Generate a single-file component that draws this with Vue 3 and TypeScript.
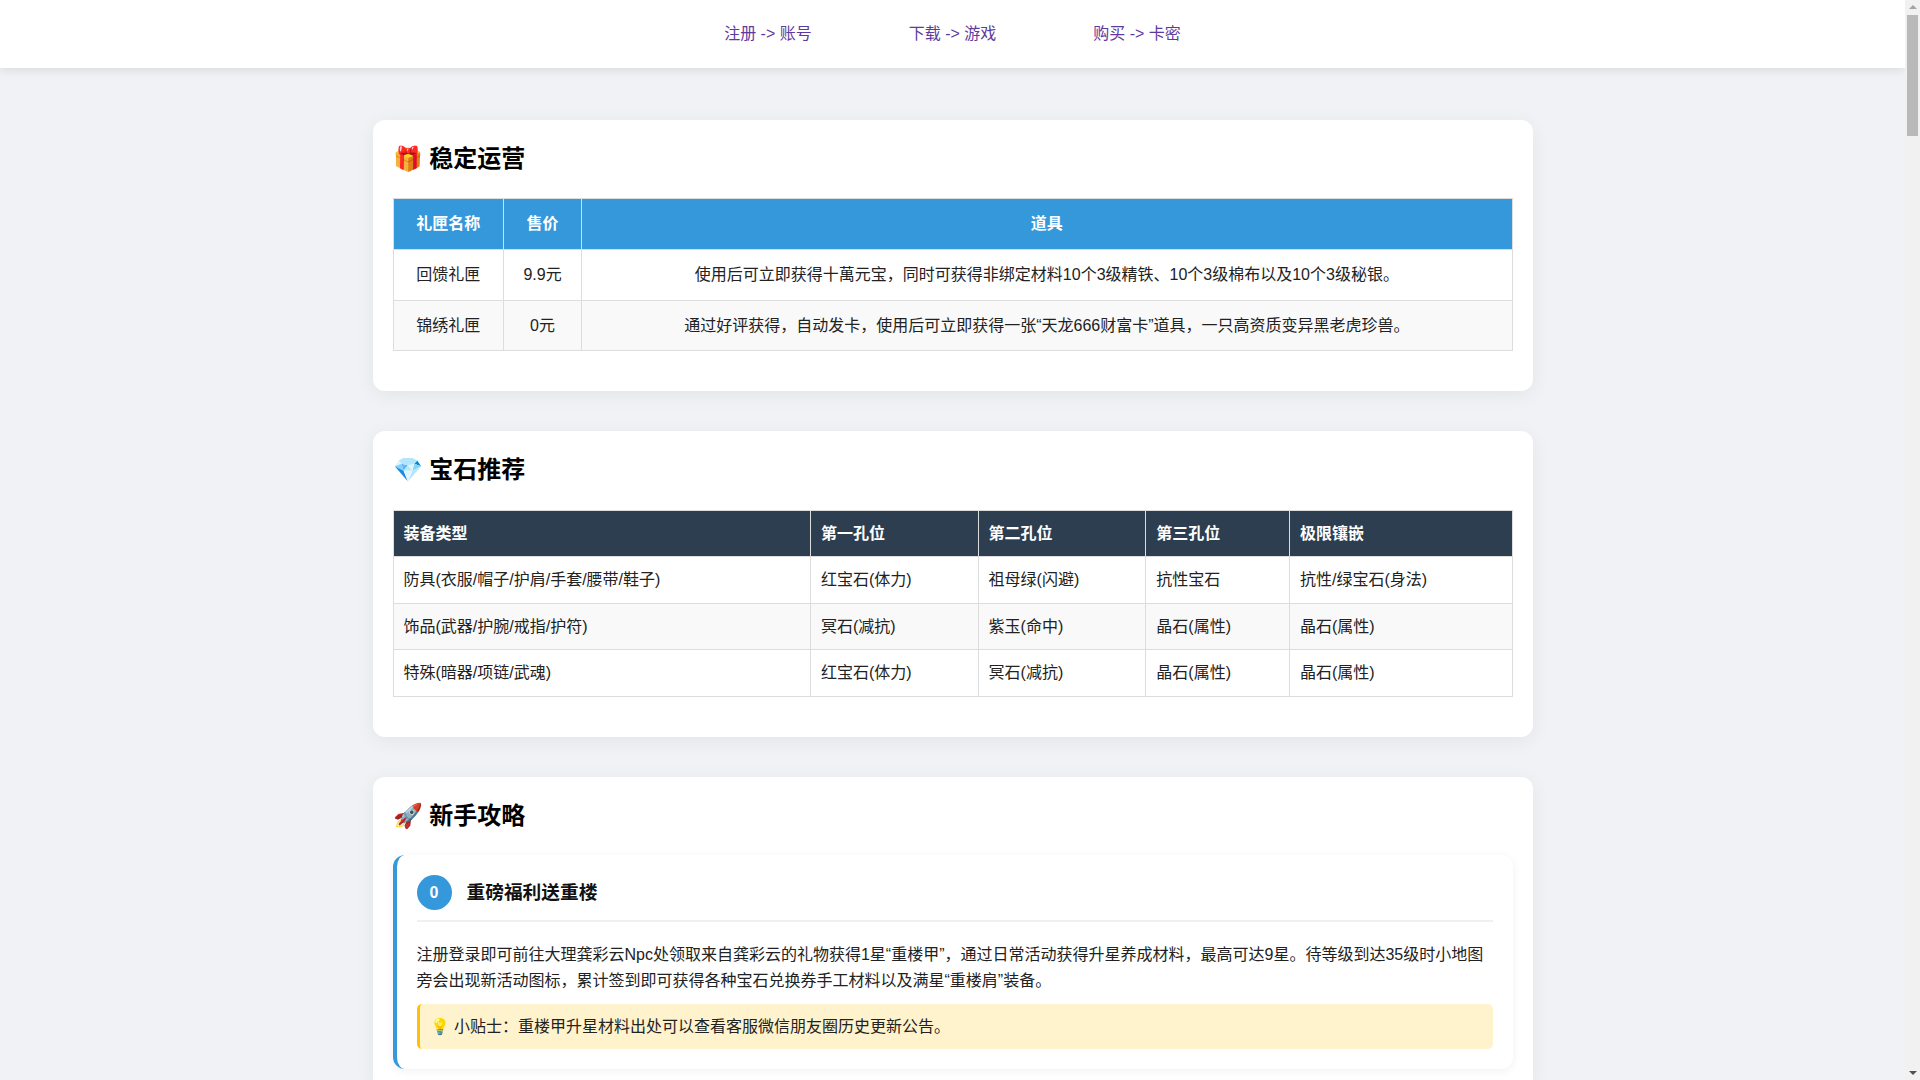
<script setup lang="ts">
interface NavLink {
  label: string;
}

interface GiftRow {
  name: string;
  price: string;
  items: string;
}

const navLinks: NavLink[] = [
  { label: '注册 -> 账号' },
  { label: '下载 -> 游戏' },
  { label: '购买 -> 卡密' }
];

const giftRows: GiftRow[] = [
  { name: '回馈礼匣', price: '9.9元', items: '使用后可立即获得十萬元宝，同时可获得非绑定材料10个3级精铁、10个3级棉布以及10个3级秘银。' },
  { name: '锦绣礼匣', price: '0元', items: '通过好评获得，自动发卡，使用后可立即获得一张“天龙666财富卡”道具，一只高资质变异黑老虎珍兽。' }
];

const gemHead: string[] = ['装备类型', '第一孔位', '第二孔位', '第三孔位', '极限镶嵌'];

const gemRows: string[][] = [
  ['防具(衣服/帽子/护肩/手套/腰带/鞋子)', '红宝石(体力)', '祖母绿(闪避)', '抗性宝石', '抗性/绿宝石(身法)'],
  ['饰品(武器/护腕/戒指/护符)', '冥石(减抗)', '紫玉(命中)', '晶石(属性)', '晶石(属性)'],
  ['特殊(暗器/项链/武魂)', '红宝石(体力)', '冥石(减抗)', '晶石(属性)', '晶石(属性)']
];
</script>

<template>
  <div class="page" lang="zh-CN">
    <nav class="nav">
      <a v-for="link in navLinks" :key="link.label" href="#" class="nav-link">{{ link.label }}</a>
    </nav>

    <main class="container">
      <section class="card">
        <h2 class="card-title">🎁 稳定运营</h2>
        <table class="gift-table">
          <thead>
            <tr>
              <th>礼匣名称</th>
              <th>售价</th>
              <th>道具</th>
            </tr>
          </thead>
          <tbody>
            <tr v-for="row in giftRows" :key="row.name">
              <td>{{ row.name }}</td>
              <td>{{ row.price }}</td>
              <td>{{ row.items }}</td>
            </tr>
          </tbody>
        </table>
      </section>

      <section class="card">
        <h2 class="card-title">💎 宝石推荐</h2>
        <table class="gem-table">
          <thead>
            <tr>
              <th v-for="head in gemHead" :key="head">{{ head }}</th>
            </tr>
          </thead>
          <tbody>
            <tr v-for="row in gemRows" :key="row[0]">
              <td v-for="(cell, i) in row" :key="i">{{ cell }}</td>
            </tr>
          </tbody>
        </table>
      </section>

      <section class="card">
        <h2 class="card-title">🚀 新手攻略</h2>
        <div class="step">
          <div class="step-head">
            <span class="step-num">0</span>
            <h3 class="step-title">重磅福利送重楼</h3>
          </div>
          <p class="step-text">注册登录即可前往大理龚彩云Npc处领取来自龚彩云的礼物获得1星“重楼甲”，通过日常活动获得升星养成材料，最高可达9星。待等级到达35级时小地图旁会出现新活动图标，累计签到即可获得各种宝石兑换券手工材料以及满星“重楼肩”装备。</p>
          <div class="tip">💡 小贴士：重楼甲升星材料出处可以查看客服微信朋友圈历史更新公告。</div>
        </div>
      </section>
    </main>

    <!-- the browser hides its own scrollbar here, so draw one over the right edge -->
    <div class="scrollbar">
      <span class="arrow-up"></span>
      <span class="thumb"></span>
      <span class="arrow-down"></span>
    </div>
  </div>
</template>

<style>
body {
  margin: 0;
  background: #f0f2f5;
}
</style>

<style scoped>
.page {
  padding-right: 15px;
  font-family: "Liberation Sans", "Noto Sans CJK SC", sans-serif;
  font-size: 16px;
  line-height: 1.6;
  color: #222;
}

.nav {
  height: 68px;
  display: flex;
  justify-content: center;
  align-items: center;
  gap: 97px;
  background: #fff;
  box-shadow: 0 2px 10px rgba(0, 0, 0, 0.1);
}

.nav-link {
  color: #5e3a9e;
  text-decoration: none;
}

.container {
  max-width: 1160px;
  margin: 52px auto 0;
}

.card {
  background: #fff;
  border-radius: 12px;
  padding: 20px;
  margin-bottom: 40px;
  box-shadow: 0 4px 20px rgba(0, 0, 0, 0.06);
}

.card-title {
  margin: 0 0 20px;
  font-size: 24px;
  font-weight: 700;
  color: #000;
}

table {
  width: 100%;
  border-collapse: collapse;
  margin-bottom: 20px;
}

th,
td {
  border: 1px solid #ddd;
}

.gift-table th,
.gift-table td {
  padding: 12px;
  text-align: center;
}

.gift-table th {
  background: #3498db;
  color: #fff;
}

.gem-table th,
.gem-table td {
  padding: 10px;
  text-align: left;
}

.gem-table th {
  background: #2c3e50;
  color: #fff;
}

tbody tr:nth-child(even) {
  background: #f9f9f9;
}

.step {
  background: #fff;
  border-left: 4px solid #3498db;
  border-radius: 12px;
  padding: 20px;
  box-shadow: 0 2px 10px rgba(0, 0, 0, 0.06);
}

.step-head {
  display: flex;
  align-items: center;
  gap: 15px;
  padding-bottom: 10px;
  margin-bottom: 20px;
  border-bottom: 2px solid #f0f0f0;
}

.step-num {
  width: 35px;
  height: 35px;
  border-radius: 50%;
  display: flex;
  justify-content: center;
  align-items: center;
  background: #3498db;
  color: #fff;
  font-weight: 700;
}

.step-title {
  margin: 0;
  font-size: 18.72px;
  color: #111;
}

.step-text {
  margin: 0 0 10px;
}

.tip {
  padding: 10px 15px 10px 10px;
  background: #fff3cd;
  border-left: 3px solid #ffc107;
  border-radius: 5px;
}

.scrollbar {
  position: fixed;
  top: 0;
  right: 0;
  bottom: 0;
  width: 15px;
  background: #f1f1f1;
}

.thumb {
  position: absolute;
  top: 15px;
  left: 2px;
  width: 11px;
  height: 121px;
  background: #b9b9b9;
}

.arrow-up,
.arrow-down {
  position: absolute;
  left: 4px;
  width: 0;
  height: 0;
  border-left: 4px solid transparent;
  border-right: 4px solid transparent;
}

.arrow-up {
  top: 5px;
  border-bottom: 4px solid #a3a3a3;
}

.arrow-down {
  bottom: 5px;
  border-top: 4px solid #505050;
}
</style>
